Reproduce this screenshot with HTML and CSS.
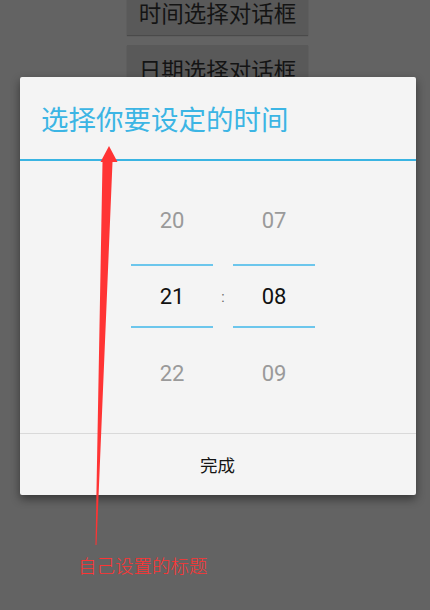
FILE: index.html
```html
<!DOCTYPE html>
<html lang="zh">
<head>
<meta charset="utf-8">
<title>时间选择对话框</title>
<link rel="stylesheet" href="styles.css">
</head>
<body>
<main class="screen">
  <div class="btn-list">
    <div class="btn">时间选择对话框</div>
    <div class="btn">日期选择对话框</div>
  </div>
</main>

<section class="dialog">
  <header class="dialog-title">选择你要设定的时间</header>
  <div class="picker">
    <div class="col">
      <div class="item item-top">20</div>
      <div class="item item-sel">21</div>
      <div class="item item-bottom">22</div>
    </div>
    <div class="colon">:</div>
    <div class="col">
      <div class="item item-top">07</div>
      <div class="item item-sel">08</div>
      <div class="item item-bottom">09</div>
    </div>
  </div>
  <footer class="dialog-actions">
    <div class="action">完成</div>
  </footer>
</section>

<svg class="arrow" width="430" height="610" viewBox="0 0 430 610">
  <polygon points="109,146 117.5,162 112.5,162 96.5,545 95.5,545 102.5,162 100.5,162" fill="#ff3434"/>
</svg>
<div class="note">自己设置的标题</div>
</body>
</html>
```
FILE: styles.css
```css
html, body {
  margin: 0;
  padding: 0;
}
body {
  width: 430px;
  height: 610px;
  overflow: hidden;
  background: #636363;
  font-family: "Noto Sans CJK SC", "Noto Sans", sans-serif;
  position: relative;
}
.screen {
  display: flex;
  justify-content: center;
}
.btn-list {
  margin-top: -12px;
  margin-left: 5px;
  display: flex;
  flex-direction: column;
  gap: 10px;
}
.btn {
  width: 181px;
  height: 47px;
  background: #595959;
  box-shadow: 0 1px 1px rgba(0,0,0,0.25);
  color: #141414;
  font-size: 22.5px;
  display: flex;
  align-items: center;
  justify-content: center;
  line-height: 1;
  padding-top: 2px;
  box-sizing: border-box;
}
.dialog {
  position: absolute;
  left: 20px;
  top: 77px;
  width: 396px;
  height: 418px;
  background: #f4f4f4;
  border-radius: 2px;
  box-shadow: 0 4px 10px rgba(0,0,0,0.45);
  display: flex;
  flex-direction: column;
}
.dialog-title {
  height: 84px;
  box-sizing: border-box;
  padding-left: 21px;
  padding-top: 1px;
  display: flex;
  align-items: center;
  color: #3cb5e4;
  font-size: 27.5px;
  line-height: 1;
  border-bottom: 2px solid #3ab4e2;
}
.picker {
  height: 272px;
  box-sizing: border-box;
  padding: 17px 0 0 111px;
  display: flex;
  align-items: flex-start;
  font-family: Roboto, "Noto Sans", sans-serif;
}
.col {
  width: 82px;
  display: flex;
  flex-direction: column;
}
.item {
  display: flex;
  align-items: center;
  justify-content: center;
  font-size: 22px;
  line-height: 1;
}
.item-top {
  height: 86px;
  color: #9a9a9a;
  border-bottom: 2px solid #6cc6ec;
}
.item-sel {
  height: 62px;
  padding-top: 2px;
  box-sizing: border-box;
  color: #111;
  border-bottom: 2px solid #6cc6ec;
}
.item-bottom {
  height: 90px;
  padding-top: 2px;
  box-sizing: border-box;
  color: #9a9a9a;
}
.colon {
  width: 20px;
  margin-top: 88px;
  height: 62px;
  display: flex;
  align-items: center;
  justify-content: center;
  color: #666;
  font-size: 14px;
}
.dialog-actions {
  flex: 1;
  border-top: 1px solid #d9d9d9;
  display: flex;
  align-items: center;
  justify-content: center;
}
.action {
  color: #151515;
  font-size: 17.5px;
  line-height: 1;
  margin-left: -1px;
}
.arrow {
  position: absolute;
  left: 0;
  top: 0;
  pointer-events: none;
}
.note {
  position: absolute;
  left: 78px;
  top: 553px;
  color: #ff3434;
  font-size: 18.5px;
  line-height: 24px;
  font-weight: 300;
}
```
